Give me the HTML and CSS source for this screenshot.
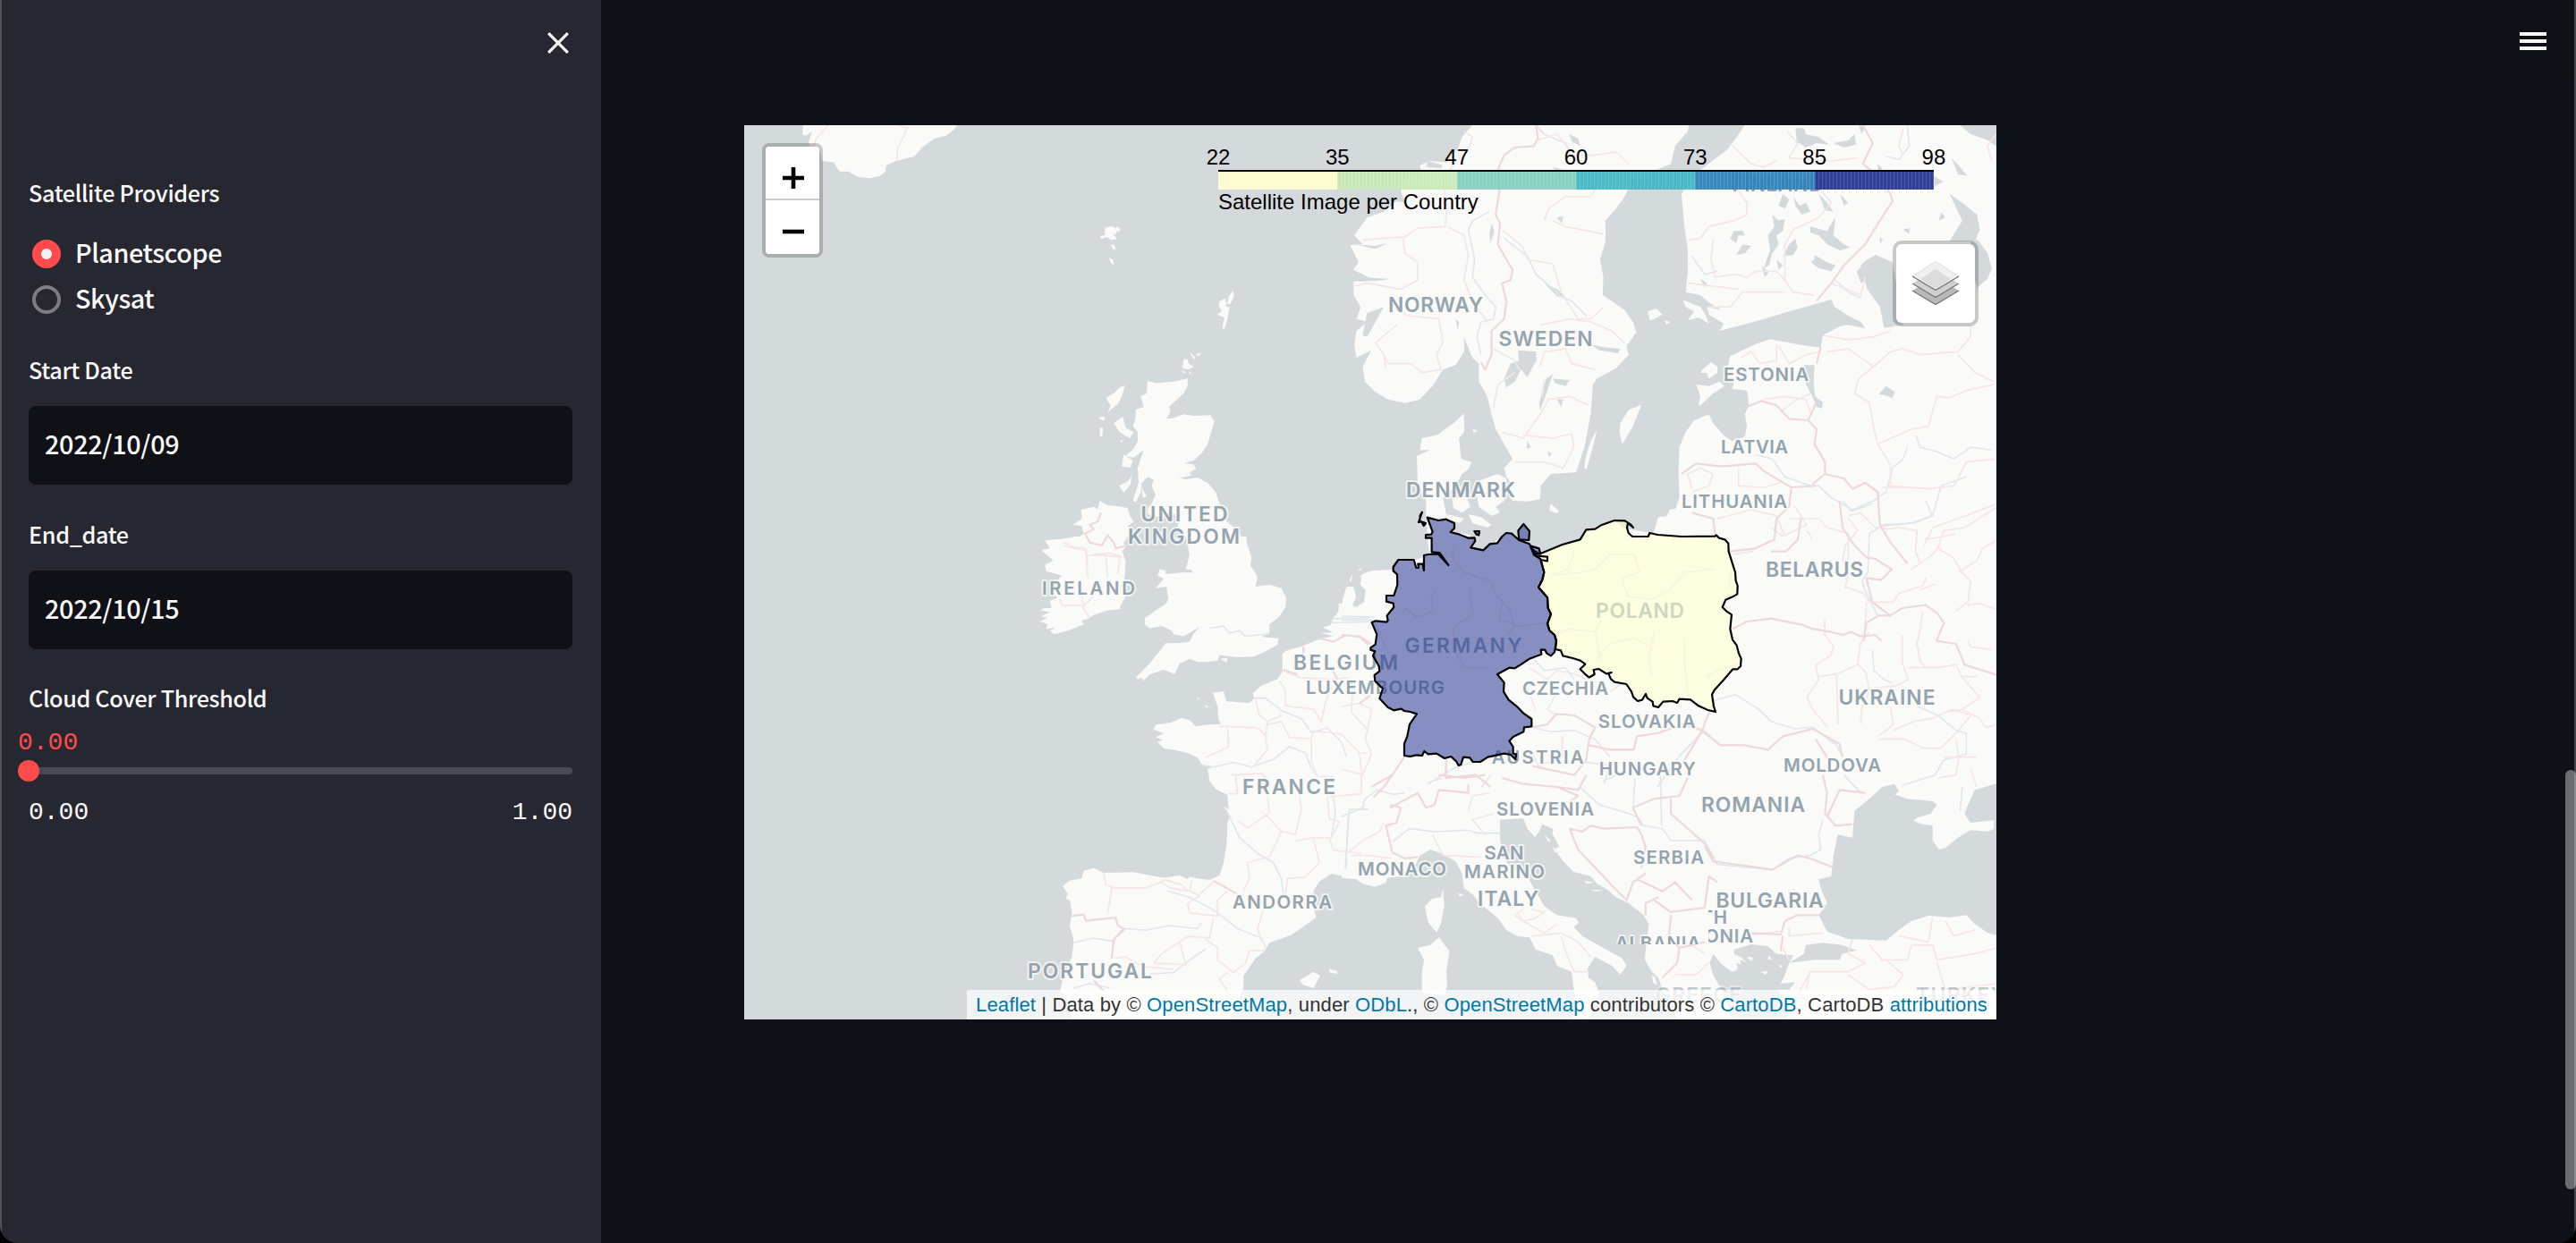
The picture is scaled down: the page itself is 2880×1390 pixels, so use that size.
FILE: index.html
```html
<!DOCTYPE html>
<html lang="en">
<head>
<meta charset="utf-8">
<title>Satellite Images</title>
<link rel="stylesheet" href="styles.css">
</head>
<body>
<div class="app">
  <aside class="sidebar">
    <div class="sidebar-top">
      <svg class="close" viewBox="0 0 24 24"><path d="M2 2L22 22M22 2L2 22"/></svg>
    </div>
    <div class="field providers">
      <div class="label">Satellite Providers</div>
      <div class="radio"><i class="dot on"></i><span>Planetscope</span></div>
      <div class="radio"><i class="dot"></i><span>Skysat</span></div>
    </div>
    <div class="field date">
      <div class="label">Start Date</div>
      <div class="input">2022/10/09</div>
    </div>
    <div class="field date">
      <div class="label">End_date</div>
      <div class="input">2022/10/15</div>
    </div>
    <div class="field slider">
      <div class="label">Cloud Cover Threshold</div>
      <div class="value">0.00</div>
      <div class="track"><i class="thumb"></i></div>
      <div class="range"><span>0.00</span><span>1.00</span></div>
    </div>
  </aside>
  <main class="main">
    <header class="header">
      <div class="menu"><i></i><i></i><i></i></div>
    </header>
    <section class="map">
      <svg class="tiles" viewBox="832 140 1400 1000">
        <defs>
          <clipPath id="row-cut"><rect x="832" y="140" width="1400" height="916"/></clipPath>
          <clipPath id="col-cut"><rect x="1910" y="140" width="322" height="1000"/></clipPath>
        </defs>
        <!-- Iceland, Faroes, northern Britain and Ireland -->
        <g class="land" transform="translate(830 130) scale(.44643 .33333)">
          <path d="M152 30L150 60 158 65 175 52 165 90 195 120 200 150 230 155 235 170 245 185 265 185 290 203 320 208 345 200 358 185 360 165 385 150 430 135 450 105 480 75 510 65 530 45 538 30Z"/>
          <path d="M908 375L925 368 940 380 935 395 928 395 938 412 925 415 912 405 900 412 895 402 908 398ZM938 368L946 378 943 390 936 380ZM922 432L930 430 936 445 929 448ZM918 475L928 480 931 500 922 490Z"/>
          <path d="M1195 620L1210 612 1212 640 1220 640 1215 680 1208 713 1202 712 1207 675 1188 665 1200 655 1193 635ZM1228 585L1232 600 1222 630 1214 630 1218 605Z"/>
          <path d="M1105 815L1115 815 1118 830 1130 840 1118 850 1102 845ZM1118 788L1135 810 1130 815ZM1135 800L1150 793 1143 805ZM1100 850L1110 860 1104 862ZM1118 856L1124 860 1120 866Z"/>
          <path d="M1015 888L1035 895 1080 890 1115 880 1115 905 1105 930 1085 955 1068 975 1072 990 1062 1015 1080 1012 1105 1000 1130 1005 1172 1003 1182 1025 1175 1055 1165 1100 1150 1130 1130 1155 1105 1165 1130 1168 1137 1182 1120 1195 1125 1205 1100 1212 1088 1210 1110 1218 1140 1212 1165 1230 1185 1260 1195 1300 1205 1350 1240 1390 1265 1440 1275 1480 1270 1520 1110 1520 1120 1470 1125 1440 1110 1410 1090 1375 1095 1345 1075 1330 1045 1345 1015 1335 1015 1315 1025 1300 1035 1270 1025 1240 1030 1220 1015 1210 1000 1230 998 1260 985 1295 978 1290 992 1230 990 1180 1005 1120 980 1145 960 1140 980 1115 990 1090 990 1060 978 1040 985 1010 985 985 1005 975 998 940 1012 930Z"/>
          <path d="M958 903L950 940 940 965 915 993 922 970 910 945 930 930 945 910ZM930 1030L952 1008 960 1045 980 1060 970 1080 945 1060ZM892 1010L908 1008 905 1022ZM895 1045L903 1045 901 1078 895 1070ZM955 1135L978 1155 972 1178 950 1175ZM975 1205L972 1235 955 1262 943 1240 965 1225ZM1000 1245L1012 1275 1003 1282ZM945 1085L953 1088 950 1096Z"/>
          <path d="M895 1290L915 1305 940 1308 965 1315 970 1340 980 1360 965 1375 975 1390 955 1430 960 1445 950 1460 960 1520 775 1520 785 1500 770 1480 750 1458 775 1450 758 1425 800 1418 830 1425 855 1400 850 1375 828 1370 850 1350 848 1320 880 1310 890 1318Z"/>
        </g>
        <!-- Scandinavia, the Baltic coast and western Russia -->
        <g class="land" transform="translate(1500 130) scale(.47194 .33333)">
          <path d="M310 30L285 70 275 110 260 130 250 155 210 150 185 165 190 190 160 205 140 250 150 290 130 285 100 320 60 340 30 400 50 430 20 432 28 455 40 490 28 515 70 545 28 555 28 600 45 640 35 680 60 690 35 720 30 770 35 810 70 785 50 840 55 890 80 925 110 950 150 962 185 950 215 905 240 850 270 835 290 790 290 740 298 770 310 810 325 830 325 890 345 940 355 1000 365 1050 385 1100 405 1150 385 1180 390 1210 405 1235 390 1255 405 1290 440 1292 470 1285 472 1240 495 1200 555 1195 575 1110 590 1000 595 900 605 880 650 845 680 800 675 770 698 725 690 690 670 650 640 620 618 600 620 540 612 480 625 420 625 350 650 310 670 270 690 210 745 180 780 160 790 100 820 50 822 30Z"/>
          <path d="M955 30L915 110 850 180 805 260 812 370 820 450 820 520 815 590 850 600 870 625 900 650 865 640 870 665 905 695 895 720 950 700 1000 680 1060 655 1110 635 1160 615 1168 640 1200 670 1230 690 1240 712 1200 700 1180 705 1140 735 1135 775 1100 770 1015 748 980 765 920 805 915 840 910 880 930 890 925 915 960 920 965 970 955 1000 960 1040 955 1075 925 1090 905 1070 880 1030 870 1000 835 1020 815 1060 800 1110 798 1200 800 1280 795 1300 785 1340 750 1345 738 1400 640 1375 580 1390 565 1420 480 1465 460 1445 430 1430 395 1400 340 1455 305 1445 305 1405 265 1395 265 1360 200 1340 205 1440 215 1510 1600 1510V30Z"/>
          <path d="M710 968L690 1040 665 1100 658 1060 660 1030 680 985ZM605 1050L595 1110 580 1185 575 1180 577 1150 590 1090ZM840 900L870 905 895 890 907 905 880 930 850 970 845 968 850 940ZM855 850L875 825 890 840 890 860 870 880 865 862 850 860ZM725 655L745 645 760 665 740 680 730 685ZM765 685L778 690 770 698ZM495 1300L515 1325 510 1332 492 1322ZM808 615L850 640 860 660 870 695 845 675 820 685 835 655 815 640Z"/>
          <path d="M290 997L290 1060 278 1080 283 1150 308 1160 300 1185 285 1200 270 1240 240 1280 250 1350 200 1345 200 1290 180 1230 178 1140 210 1120 185 1120 190 1080 225 1070 265 1030ZM262 1285L295 1275 305 1310 285 1330 265 1315ZM330 1220L370 1200 390 1215 385 1290 365 1310 375 1330 355 1340 325 1310 320 1270ZM300 1335L330 1345 355 1370 345 1380 310 1365ZM310 1048L322 1055 313 1062ZM250 1335L290 1350 280 1365 250 1350Z"/>
        </g>
        <g class="lake" transform="translate(1500 130) scale(.47194 .33333)">
          <path d="M418 785L460 790 462 820 455 835 440 875 425 850 410 890 390 910 385 880 400 830 420 820ZM500 865L485 930 470 988 468 960 478 910 485 880ZM1095 835L1120 835 1118 900 1122 940 1140 960 1137 980 1125 975 1115 940 1100 900ZM1290 905L1310 925 1305 945 1285 935 1272 932ZM1230 500L1240 485 1265 465 1305 490 1330 700 1285 710 1275 640 1245 580ZM1490 400L1510 420 1530 460 1540 510 1530 545 1505 575 1490 500ZM1440 260L1470 290 1505 330 1512 380 1500 420 1440 420 1470 350ZM1465 30L1490 60 1530 80 1560 110 1600 30ZM1403 200L1425 220 1405 235ZM1445 140L1465 170 1482 200 1460 195Z"/>
          <path d="M1075 40L1095 40 1100 60 1130 70 1155 95 1125 90 1100 105 1078 85ZM1165 90L1200 80 1215 60 1218 95 1190 105ZM1225 30L1240 35 1232 60ZM1270 160L1280 175 1284 195 1270 180ZM1330 380L1345 375 1345 395ZM1230 560L1220 520 1235 500 1250 540ZM1345 220L1360 240 1340 230ZM540 60L560 75 565 100 545 85ZM500 170L525 180 515 195ZM510 340L525 335 522 360ZM355 360L362 385 352 425 350 395ZM480 560L510 580 530 605 512 605ZM590 765L620 775 660 780 655 795 610 785ZM500 880L540 885 530 905 505 895ZM510 950L525 950 520 975ZM440 1090L448 1110 438 1115ZM488 1125L498 1130 492 1145ZM205 150L240 165 235 175 200 170ZM270 680L278 690 275 720ZM30 430L80 435 110 425 80 445ZM40 540L110 545 145 530 100 550 40 555ZM60 660L100 640 60 740 50 735Z"/>
          <path d="M930 385L950 385 955 400 940 400 935 425 920 410ZM950 430L970 435 955 460 935 465ZM1020 330L1035 350 1050 345 1045 385 1030 400 1035 430 1020 460 1012 500 1000 510 1015 450 1010 400 1025 370ZM1070 270L1085 300 1100 290 1110 320 1090 330 1075 300ZM1045 260L1060 280 1050 310 1035 300ZM1130 260L1150 290 1165 320 1145 315ZM1060 430L1075 410 1080 440 1070 465 1045 470ZM1110 370L1150 385 1160 360 1170 340 1165 400 1190 430 1205 440 1180 450 1150 430 1130 400 1110 390ZM1120 465L1150 490 1170 500 1160 520 1130 510 1112 490 1120 480ZM1180 260L1200 290 1190 300ZM1030 480L1045 500 1035 515ZM850 545L865 560 860 575ZM995 500L1012 525 1002 540ZM1420 320L1430 340 1415 350ZM1275 405L1282 415 1275 430Z"/>
        </g>
        <!-- Ireland, southern Britain, France and Iberia -->
        <g class="land" transform="translate(830 600) scale(.44643 .35075)">
          <path d="M835 0L955 0 950 40 960 80 958 120 955 160 960 190 945 225 948 232 915 235 880 250 865 262 850 268 855 280 820 298 780 312 770 300 785 290 760 295 765 280 745 270 765 258 748 255 770 240 745 235 755 228 775 228 770 205 790 195 780 185 795 165 785 145 800 125 760 110 758 90 780 75 750 42 770 38 758 12 800 8Z"/>
          <path d="M1110 0L1115 20 1120 60 1117 90 1128 115 1100 115 1060 120 1060 108 1045 103 1040 125 1055 135 1035 165 1062 160 1067 200 1060 215 1035 235 1008 260 1008 280 1020 293 1050 285 1075 300 1080 312 1105 318 1145 288 1130 310 1120 335 1090 340 1060 340 1042 370 1020 405 985 450 990 455 1000 450 1005 460 1020 440 1055 425 1082 438 1095 405 1120 390 1140 400 1165 400 1190 395 1195 378 1240 385 1280 383 1305 370 1340 345 1343 325 1300 320 1320 305 1320 280 1345 255 1360 225 1362 195 1350 165 1320 153 1285 160 1290 130 1280 105 1260 75 1275 75 1265 30 1262 0Z"/>
          <path d="M1197 390L1215 388 1212 402ZM1395 1415L1430 1388 1447 1400 1430 1440 1405 1430ZM1468 1378L1490 1385 1490 1395 1472 1390ZM1138 514L1144 516 1140 520ZM1158 538L1168 541 1162 547ZM1548 125L1570 112 1570 165 1555 165ZM1520 140L1528 120 1524 145ZM1540 108L1552 100 1550 107Z"/>
          <path d="M1515 160L1530 160 1537 190 1528 220 1545 228 1570 205 1600 205 1600 1130 1568 1115 1550 1100 1510 1085 1475 1075 1445 1100 1430 1130 1430 1180 1437 1215 1375 1270 1320 1295 1305 1325 1285 1345 1255 1400 1255 1440 1235 1500 1220 1545 825 1545 820 1480 795 1450 805 1400 825 1340 830 1290 820 1240 825 1200 820 1160 810 1155 815 1140 802 1115 820 1097 850 1090 855 1065 880 1057 905 1072 980 1070 1040 1085 1060 1088 1095 1080 1115 1092 1120 1085 1140 1090 1170 1095 1195 1080 1205 1040 1213 980 1215 910 1222 890 1205 860 1218 870 1215 825 1185 805 1170 780 1165 740 1175 738 1150 725 1140 705 1115 690 1080 680 1055 675 1040 655 1052 648 1035 640 1055 628 1030 615 1035 600 1075 592 1100 578 1120 585 1135 605 1160 600 1198 598 1192 580 1190 540 1178 498 1205 493 1212 525 1270 530 1282 515 1278 500 1300 475 1340 455 1353 430 1352 375 1360 365 1400 350 1450 325 1480 318 1450 308 1478 305 1455 290 1475 280 1478 262 1495 235 1508 200Z"/>
        </g>
        <!-- Central and eastern Europe -->
        <g class="land" transform="translate(1500 560) scale(.33333)">
          <path d="M-10 345L0 345 15 290 35 295 40 340 30 370 75 340 80 300 62 280 70 245 100 235 175 230 190 200 240 200 300 180 290 60 350 65 380 110 440 125 435 160 475 165 555 108 630 150 680 175 800 130 850 95 920 67 970 120 1060 110 1100 30 1150 20 1160 0 2200 0 2200 970H-10Z"/>
        </g>
        <!-- Italy, the Balkans and the Black Sea -->
        <g transform="translate(1500 860) scale(.47194 .33333)">
          <path class="land" d="M0 0H1560V850H0Z"/>
          <path class="water" d="M-5 365L35 370 50 385 80 395 105 380 108 365 160 355 175 320 185 290 210 270 240 285 270 310 285 350 290 400 310 420 330 455 345 470 370 500 390 540 415 560 445 565 460 605 500 625 510 660 545 680 550 740 555 780 545 850H-5Z"/>
          <path class="water" d="M375 170L430 165 440 200 458 228 470 205 475 185 500 200 500 220 515 260 505 270 525 310 550 345 590 360 605 385 630 405 650 430 680 450 715 490 728 520 722 580 718 640 735 680 750 700 760 740 800 850H580L610 750 600 715 585 700 582 670 600 630 640 660 660 690 675 660 665 635 620 600 570 560 550 530 562 515 555 500 510 490 480 460 455 400 440 360 400 330 380 290 375 230Z"/>
          <path class="water" d="M930 605L970 588 1010 595 1030 620 1070 625 1060 650 1050 690 1040 720 1075 715 1060 740 1035 740 1050 800 1060 850H930L900 740 880 690 872 650 880 620 900 655 925 680 938 670 935 650 945 655 945 640 960 650 945 630 930 620Z"/>
          <path class="water" d="M1100 590L1140 583 1185 590 1220 608 1185 620 1180 640 1120 640 1060 650 1095 620Z"/>
          <path class="water" d="M1280 60L1310 50 1320 75 1310 85 1340 100 1400 108 1410 120 1395 150 1360 165 1355 175 1375 185 1400 190 1400 240 1415 270 1430 265 1460 230 1490 205 1530 210 1545 200 1545 172 1490 180 1475 150 1490 100 1500 70 1560 45V560L1530 550 1500 520 1480 490 1440 498 1390 492 1350 510 1320 540 1290 575 1200 570 1150 545 1130 490 1150 450 1135 400 1130 370 1160 360 1165 290 1175 220 1210 230 1215 140 1250 100Z"/>
          <path class="land" d="M240 403L243 460 235 520 225 548 205 515 197 460 215 435 235 430ZM230 565L255 610 248 680 250 720 245 760 190 750 190 680 195 640 180 600 210 590ZM275 418L290 420 280 428ZM960 630L975 632 970 645ZM1012 625L1020 640 1010 638ZM992 680L1010 678 1005 690ZM1035 655L1045 660 1040 668ZM735 692L742 695 748 725 738 718ZM480 220L495 240 490 245ZM575 375L600 380 580 385ZM590 405L620 405 600 410ZM500 260L512 275 505 280ZM930 655L935 680 925 672Z"/>
        </g>
        <!-- Rivers -->
        <g class="river" transform="translate(1500 130) scale(.47194 .33333)">
          <path d="M350 320L310 350 300 380 315 480 310 540 340 600 365 640 360 680 330 690 320 740 330 800M385 410L440 470 460 530 485 560 520 605 545 620 580 670M480 60L530 90 545 140M460 30L480 60M1340 30L1345 100 1320 145 1290 135M830 470L860 530 890 520M1170 550L1200 590 1230 610M980 1135L1020 1150 1050 1210 1110 1240 1130 1240 1160 1280 1210 1320 1260 1290 1290 1260 1305 1180 1330 1150 1340 1110M1280 1375L1350 1365 1400 1340 1420 1240 1480 1210M1360 1070L1370 1110 1410 1125 1450 1150 1490 1110 1540 1120"/>
        </g>
        <g class="river" transform="translate(830 600) scale(.44643 .35075)">
          <path d="M1170 292L1205 285 1220 308 1245 300 1260 318 1320 310M1282 515L1310 515 1350 555 1400 580 1425 625 1465 610 1500 655 1512 700M1150 728L1180 735 1230 720 1275 735 1330 710 1370 670 1410 690 1425 740 1440 760M1215 880L1245 960 1290 1010 1330 1040 1350 1090 1355 1140M1065 1130L1120 1150 1180 1190 1240 1250 1300 1280 1310 1310M830 1295L880 1280 925 1290 960 1250 1010 1255 1070 1240 1140 1250 1150 1230M1020 1395L1080 1390 1120 1350 1160 1315M1480 830L1485 880 1475 960M1568 870L1520 870 1510 1060M1478 262L1568 260M1478 275L1568 272M830 1440L870 1425 920 1440"/>
        </g>
        <g class="river" transform="translate(1500 560) scale(.33333)">
          <path d="M0 400L110 400 150 500M0 388L110 390M640 525L680 570 750 560 780 600M900 640L960 600M290 950L370 900 430 880M640 760L700 775 780 770 850 800 900 860M1210 775L1130 860 1060 960M1210 775L1260 810M1250 670L1320 650 1400 700 1440 740 1520 765 1580 760 1660 820 1680 860M1680 0L1710 35 1780 10M1960 0 1980 50 1920 75 1820 80 1770 110 1765 240 1745 270 1760 310 1800 390M1780 500L1785 570 1820 600 1845 610M1930 690L2000 720 2060 770 2095 780 2095 850 2020 870 1990 920 1880 955M780 870L900 890 880 950M470 960L500 920"/>
        </g>
        <g class="river" transform="translate(1500 860) scale(.47194 .33333)">
          <path d="M0 160L50 130 55 100 85 70 120 85 150 80M15 160L10 330M120 245L160 200 220 210 300 205 320 215 380 215M205 45L240 30M565 60L610 120 660 140 700 160 715 190 760 200 780 240 860 240 890 320 960 330 1020 338 1060 300 1110 290 1135 270 1130 220 1140 170M695 30L690 140M755 20L758 190M620 40L650 20M1190 20L1230 80M1470 60L1465 140"/>
        </g>
        <!-- Regional boundaries -->
        <g class="region" transform="translate(830 130) scale(.44643 .33333)">
          <path d="M215 30L185 75 180 95 165 105M415 35L388 110 388 150M390 30L415 40M805 1430L830 1445 860 1450 865 1500M880 1470L920 1465 950 1480"/>
        </g>
        <g class="region" transform="translate(1500 130) scale(.47194 .33333)">
          <path d="M290 50L310 70 300 110 260 170 240 220 250 300 245 370 180 375 150 405 90 410 50 415M250 370L290 400 300 470 290 550 310 620 345 690M145 410L150 460 180 490 180 550 140 580 60 560 30 570M140 600L130 650 160 670 230 680 240 760 225 800 235 850 190 860 165 830 110 830 100 800M130 700L80 760 100 800 105 850M380 380L430 440 440 480 500 495 520 590 560 680 590 680 620 640M480 350L490 310 530 270 590 270 610 220M500 350L530 370 620 395M465 80L510 60 550 130 600 130 650 120 680 160M470 700L540 680 590 690 640 720 670 760M360 780L410 820 420 850M470 840L480 790 530 780 545 830 600 850M360 980L370 900 410 860M380 1060L430 1080 470 1000 490 950 540 940 585 970M430 1070L500 1080 545 1065 550 1110 525 1180 480 1160 410 1160M475 940L480 880"/>
          <path d="M820 415L850 410 870 370 930 350 960 330 960 290 935 240M920 90L970 160 1000 170 1030 150M880 410L875 480 885 540 930 530 960 540 980 520 1030 520 1050 550 1070 590 1120 600M1050 550L1050 430 1070 380 1130 340 1160 290 1130 240M1055 50L1080 90 1060 140 1160 150 1220 140M870 640L920 640 950 590 1000 590 1050 590M820 560L880 570 940 580M1160 560L1230 600 1240 540M945 810L970 790 990 830 1030 820 1030 765M1035 770L1060 830 1100 800 1135 790M1000 950L1050 940 1100 950 1110 990M1040 990L1080 950 1110 930M1140 735L1200 750 1260 740 1300 720M1150 790L1200 780 1260 840 1300 790 1330 780 1370 800 1460 790 1490 740 1490 700M1460 800L1500 860 1545 890M1545 900L1480 920 1440 945 1410 940 1390 1040 1350 1050 1270 1100 1260 1040 1250 960 1215 930 1225 880 1260 840M1270 1100L1300 1170 1300 1240 1390 1250 1450 1240 1480 1160 1545 1150M1280 1245L1340 1245M830 1250L820 1200 850 1180 880 1200 870 1240 830 1260M940 1180L940 1240 1000 1245 1040 1230M1330 40L1320 100 1330 130M1550 60L1530 100 1540 150M890 1350L970 1320 1030 1340 1050 1410M1060 1350L1130 1350 1150 1380 1200 1400 1200 1500M1380 1440L1400 1380 1480 1340 1551 1300"/>
        </g>
        <g class="region" transform="translate(830 600) scale(.44643 .35075)">
          <path d="M805 30L860 45 865 130M860 60L910 60 915 130M880 55L945 65 940 120M795 200L800 220 855 220 880 190M850 190L855 230 870 260M1355 430L1400 450 1480 455 1520 450M1345 460L1360 490 1360 540 1430 550 1450 590 1460 530 1475 480M1285 520L1295 570 1315 590 1350 570M1315 590L1310 640 1315 680 1285 725 1275 740M1195 605L1290 610 1315 640M1215 610L1218 670 1160 705M1315 600L1350 590 1370 640 1425 645 1430 620 1500 630 1545 690 1568 690M1425 650L1425 720 1440 765 1480 765M1225 760L1300 755 1320 780M1235 760L1240 820 1215 820M1315 830L1320 880 1265 930 1240 905M1305 880L1350 940 1385 950 1400 870 1395 820M1350 940L1320 1020 1265 1040 1270 1090 1255 1130M1385 970L1430 960 1445 1040 1410 1085 1365 1090 1360 1140M1430 960L1470 960 1480 1000 1550 1010M1465 830L1470 900 1495 910 1475 960M1470 830L1550 820 1550 750 1545 690M1530 470L1525 560 1568 620M1215 1130L1190 1160 1190 1210 1120 1200 1115 1170 1145 1145 1120 1130 1125 1095M1145 1140L1180 1100M905 1075L910 1110 930 1120 1010 1120 1060 1095 1100 1110 1115 1130 1070 1120 1045 1100M925 1120L915 1200M1180 1215L1170 1280 1115 1275 1050 1330 1030 1360 1110 1365 1095 1290M1160 1285L1190 1310 1190 1350 1230 1390 1260 1360 1270 1320 1310 1320M1305 1190L1290 1250 1300 1290M1215 1390L1195 1410 1215 1450M930 1345L960 1340 1000 1370 1080 1380"/>
        </g>
        <g class="region" transform="translate(1500 560) scale(.33333)">
          <path d="M200 380L215 360 250 390 310 370 300 330 320 290M380 150L370 190 410 240 500 270 520 320 560 360 580 420 540 470 480 480M430 300L440 380 380 420 370 480 410 560 500 560M540 330L530 400 600 420 690 410M720 250L800 240 850 230 900 180 980 180 1000 240 940 260 960 320 1040 330M780 170L760 230 700 250M720 450L760 430 850 440 870 400M850 440L870 540M1040 330L1100 300 1150 240 1250 230M1050 440L1030 520 1040 590M1150 460L1150 540 1160 640M850 540L900 480 980 460 1050 500M0 690L60 680 100 700 80 800 100 850 70 920 0 900M630 560L690 600 720 570 780 580 820 600M620 620L650 700M720 650L690 700 720 720M640 850L660 890 740 860 740 790M1220 590L1260 570 1340 545M1300 300L1310 210M1310 180L1380 170"/>
          <path d="M1700 50L1740 40 1790 90 1830 95 1870 90 1930 100 1925 170 1940 210M1700 60L1730 100 1690 150 1680 200 1700 240 1690 290 1750 310 1770 340 1850 340 1870 310 1950 285 1960 260M1955 130L2020 120 2060 110M1760 340L1755 430M1940 300 1990 280M2200 20L2090 90 2020 100 2000 160 1970 190 1910 230M2000 160L2050 190 2080 240 2110 270 2100 340 2060 370M2200 130L2150 160 2130 200 2070 240M2100 350L2140 345 2200 365M1620 400L1620 450 1650 490 1640 520 1590 550 1600 600 1560 660 1580 700 1630 760M1600 590L1660 580 1665 750M1665 580L1730 550 1740 480 1770 440M1735 550L1760 580 1770 640 1745 690 1740 750M1770 630L1860 620 1900 600 1880 540 1880 450M1950 370L1940 430 1930 480 1940 540 1960 560M1900 560L2000 560 2060 550 2080 590 2130 590M2080 590L2140 660 2080 700 2020 710M2080 700L2140 730 2160 760 2200 750M1840 690L1850 750 1800 790M1850 770L1920 740 1980 730 2050 700 2110 720 2060 780 2010 830 1950 830 1890 800 1800 800M2060 800L2070 860 2060 920 2000 930M2020 860 2130 860M2180 500 2110 490 2100 470M2110 900L2130 960M1520 20L1560 80 1480 120 1440 90M1560 100L1580 130"/>
        </g>
        <g class="region" transform="translate(1500 860) scale(.47194 .33333)">
          <path d="M15 280L50 240 90 210 100 180M20 290L60 290 120 300M215 220L240 290 330 295M300 140L310 90 350 80M360 150L310 170 340 220M415 480L430 510 460 500 480 480 450 470M430 470L410 490 430 510 480 550 510 520M450 560L520 550 560 580 590 630M520 560L530 610 550 680 585 680M790 560L840 600 860 620M790 690L840 690 870 650M1045 600L1060 640M1060 530L1060 560 1140 550M1210 570L1200 620 1240 650 1200 680 1110 680 1100 740M1250 590L1280 640 1340 640 1350 590 1400 590 1410 640 1500 620 1551 600M1320 560L1390 580 1400 500M1200 690L1250 740 1310 730 1330 690 1290 640M1410 650L1430 740 1551 720M1430 510L1450 560 1500 540M1110 680L1080 760 1120 790M950 560L1040 545"/>
        </g>
        <!-- National boundaries -->
        <g class="border">
          <g transform="translate(830 130) scale(.44643 .33333)"><path d="M898 1330L890 1360 870 1370 880 1385 858 1400 870 1430 900 1440 915 1405 930 1430 935 1450 962 1440"/></g>
          <g transform="translate(1500 130) scale(.47194 .33333)">
            <path d="M460 30L465 75 455 100 410 105 385 130 370 180 375 240 365 330 375 360 370 430 390 480 405 515 400 550 380 560 390 620 385 680 355 720 355 800 340 850 330 825M1235 30L1258 90 1235 160 1270 200 1300 260 1305 285 1275 350 1240 430 1190 500 1160 560 1125 620M1135 775L1125 830M960 975L995 955 1030 970 1060 1015 1105 1020 1125 960M1105 1020L1125 1050 1120 1100 1145 1160 1145 1200 1115 1235M805 1200L840 1165 900 1175 980 1165 1000 1190 1035 1220 1065 1245 1120 1240M1145 1200L1190 1215 1210 1250 1240 1230 1270 1260 1275 1370 1300 1430 1340 1500M1065 1250L1060 1310 1030 1350 1025 1420 980 1450 920 1460M830 1330L880 1350 885 1405"/>
          </g>
          <g transform="translate(830 600) scale(.44643 .35075)">
            <path d="M1445 325L1480 335 1510 315 1545 320 1568 345M1405 350L1405 375M1355 425L1390 440M1480 430L1490 455M1180 1098L1205 1115 1240 1140M825 1210L855 1205 860 1225 935 1215 940 1240 955 1250 930 1285 925 1345M880 1415L905 1450"/>
          </g>
          <g transform="translate(1500 560) scale(.33333)">
            <path d="M0 450L60 455 100 480M100 650L60 680M100 960L170 920 210 860M350 860L350 930 450 920 500 960M640 760L690 750 720 715 780 720 850 760 830 800 820 870 780 920 640 890M830 820L900 835 980 835 990 790 1060 780 1140 750 1210 770M1250 670L1220 740 1210 770 1270 820 1350 820 1430 835 1480 790 1580 765 1670 815 1680 860M1210 770L1120 920M1310 430L1360 405 1440 395 1540 415 1580 430 1640 440 1680 450 1710 440 1740 455 1790 450 1810 470M1590 800L1640 880M1670 0L1680 90 1720 150 1760 190 1790 195 1845 230 1810 265 1760 260 1780 340 1840 385 1880 360 1960 350 2000 380 2020 410 1995 470 2060 480 2090 550 2200 585M1800 385L1760 410 1750 470M1800 385H1840M1440 170L1490 170 1530 130 1540 60"/>
          </g>
          <g transform="translate(1500 860) scale(.47194 .33333)">
            <path d="M75 95L100 60 120 20M115 120L140 130 130 180 105 190 120 280 150 300 180 295M115 130L180 80 200 130 220 120 230 70 300 80 300 50M230 20L290 30 340 20M380 30L430 50 510 60 560 70 580 20M510 60L560 90 540 110M540 200L570 210 590 190 620 200 700 195 710 220 720 260 710 330M540 200L560 270 600 330 640 390 675 440 690 380 720 350M820 30L800 90 740 100 690 130 710 190M780 100L780 150 820 200 860 250 880 300M860 260L880 310 960 325 1020 338 1080 290 1110 300 1165 330M700 370L760 410 790 380 830 440M750 430L720 450 720 490M740 440L780 480 860 465 870 360 890 380M780 490L775 560 800 600 860 580M800 600L795 650 760 700M970 550L1040 555 1050 510 1080 490 1130 490M1045 560L1040 610M1140 20L1150 80 1145 150 1170 190 1210 185M1150 160L1180 70 1240 80"/>
          </g>
        </g>
        <!-- Country names -->
        <g class="names">
          <g class="big">
            <text x="1275.5" y="583.2" textLength="97">UNITED</text>
            <text x="1261" y="608.2" textLength="125">KINGDOM</text>
            <text x="1446" y="748.5" textLength="117">BELGIUM</text>
            <text x="1389" y="888" textLength="104">FRANCE</text>
            <text x="1149" y="1094" textLength="139">PORTUGAL</text>
            <text x="1552" y="349" textLength="106">NORWAY</text>
            <text x="1675.5" y="386.5" textLength="105">SWEDEN</text>
            <text x="1572" y="555.6" textLength="122">DENMARK</text>
            <text x="1936.5" y="214" textLength="102">FINLAND</text>
            <text x="1784" y="690.6" textLength="99">POLAND</text>
            <text x="1570.5" y="729.6" textLength="131">GERMANY</text>
            <text x="1974" y="644.8" textLength="109">BELARUS</text>
            <text x="2055.5" y="788.2" textLength="108">UKRAINE</text>
            <text x="1902" y="907.6" textLength="116">ROMANIA</text>
            <text x="1652" y="1013" textLength="68">ITALY</text>
            <text x="1918.6" y="1015" textLength="120">BULGARIA</text>
            <g class="faint">
              <text x="1851" y="1121" textLength="96">GREECE</text>
              <text x="2142" y="1121" textLength="100">TURKEY</text>
            </g>
          </g>
          <text x="1165" y="664.6" textLength="104">IRELAND</text>
          <text x="1460" y="776.4" textLength="155">LUXEMBOURG</text>
          <text x="1378" y="1016.4" textLength="111">ANDORRA</text>
          <text x="1927" y="426.4" textLength="95">ESTONIA</text>
          <text x="1924" y="507" textLength="75">LATVIA</text>
          <text x="1880" y="568.2" textLength="118">LITHUANIA</text>
          <text x="1702" y="777" textLength="96">CZECHIA</text>
          <text x="1786.7" y="814.4" textLength="109">SLOVAKIA</text>
          <text x="1667.7" y="854" textLength="103">AUSTRIA</text>
          <text x="1787.7" y="867" textLength="108">HUNGARY</text>
          <text x="1994" y="863.4" textLength="109">MOLDOVA</text>
          <text x="1673" y="912.4" textLength="109">SLOVENIA</text>
          <text x="1826" y="966" textLength="79">SERBIA</text>
          <text x="1659.5" y="961.4" textLength="44">SAN</text>
          <text x="1637" y="982" textLength="90">MARINO</text>
          <text x="1518" y="979" textLength="99">MONACO</text>
          <text x="1806" y="1062.4" textLength="95" clip-path="url(#row-cut)">ALBANIA</text>
          <g clip-path="url(#col-cut)">
            <text x="1855" y="1033.4" textLength="76">NORTH</text>
            <text x="1827" y="1054.4" textLength="133">MACEDONIA</text>
          </g>
        </g>
        <!-- Choropleth -->
        <g class="choropleth" transform="translate(1500 560) scale(.33333)">
          <path class="poland" d="M680 172L740 147 800 130 820 97 850 95 870 82 915 66 950 67 970 80 978 90 960 75 957 90 962 108 975 120 1028 120 1033 108 1060 114 1140 120 1252 119 1256 115 1266 125 1285 130 1297 143 1298 170 1320 240 1322 268 1328 285 1327 313 1315 320 1288 332 1277 357 1290 370 1308 382 1303 430 1311 466 1325 485 1332 512 1340 530 1338 555 1328 565 1312 565 1280 602 1250 635 1242 650 1248 690 1254 708 1228 702 1197 688 1170 667 1133 665 1125 678 1110 672 1078 674 1062 693 1045 688 1043 674 1025 662 1020 648 1008 668 993 672 978 658 972 640 955 615 915 608 903 598 895 580 905 576 888 580 862 564 845 567 848 582 830 593 815 580 800 565 817 548 800 536 775 528 742 520 735 502 717 498 720 470 714 450 697 435 690 412 702 380 692 360 690 325 660 290 673 265 679 240 667 198 690 202 690 188 650 184 640 165 665 178Z"/>
          <path class="germany" d="M287 56L325 66 350 62 378 75 378 92 365 105 392 112 425 125 446 124 448 135 433 157 475 166 497 145 522 142 538 120 552 108 570 110 595 132 630 145 645 182 667 195 679 240 673 265 660 290 690 325 692 360 702 380 690 412 697 435 714 450 720 470 714 508 702 520 688 512 682 500 668 500 670 515 645 524 630 530 600 550 580 562 562 560 522 582 545 610 543 640 560 668 590 692 610 713 637 732 637 757 612 760 610 775 575 792 562 806 575 825 575 848 585 850 583 868 567 852 545 848 490 860 465 876 440 876 430 862 408 860 400 885 392 888 385 875 367 858 345 864 318 848 290 850 277 840 270 855 250 853 230 858 210 855 210 815 220 790 228 750 252 715 230 708 210 705 200 698 175 703 155 693 127 663 138 630 112 605 110 585 127 572 125 555 105 520 112 505 97 500 97 493 113 482 118 448 101 408 115 403 150 407 155 402 152 385 175 357 173 344 150 338 150 318 175 318 187 282 186 247 173 235 173 222 190 198 242 198 250 225 258 225 256 212 272 212 276 234 276 183 290 180 323 178 358 216 328 174 302 172 302 125 282 125 282 114 300 113 305 104Z"/>
          <path class="germany" d="M610 78L630 102 628 132 595 130 592 100ZM445 102L462 102 460 115 452 113ZM635 152L662 160 667 178 650 178ZM270 38L263 50 262 68 282 75 275 84 268 70 258 72Z"/>
        </g>
      </svg>

      <div class="zoom">
        <div class="btn"><svg viewBox="0 0 26 26"><path d="M1 13H25M13 1V25"/></svg></div>
        <div class="btn"><svg viewBox="0 0 26 26"><path d="M1 13H25"/></svg></div>
      </div>

      <div class="legend">
        <div class="ticks"><span>22</span><span>35</span><span>47</span><span>60</span><span>73</span><span>85</span><span>98</span></div>
        <div class="bar"><i class="c1"></i><i class="c2"></i><i class="c3"></i><i class="c4"></i><i class="c5"></i><i class="c6"></i></div>
        <div class="caption">Satellite Image per Country</div>
      </div>

      <div class="layers">
        <svg viewBox="0 0 52 50">
          <path fill="#b9b9b9" d="M0 33L26 17 52 33 26 49Z"/><path class="edge" d="M0 33L26 48.5 52 33"/>
          <path fill="#d0d0d0" d="M0 25L26 9 52 25 26 41Z"/><path class="edge" d="M0 25L26 40.5 52 25"/>
          <path fill="#f0f0f0" stroke="#c8c8c8" stroke-width=".6" d="M0 17L26 .5 52 17 26 32Z"/><path fill="#dcdcdc" d="M9 20L26 9 43 20 26 31Z"/><path class="edge" d="M0 17L26 32.5 52 17"/>
        </svg>
      </div>

      <div class="attribution"><a>Leaflet</a> | Data by © <a>OpenStreetMap</a>, under <a>ODbL</a>., © <a>OpenStreetMap</a> contributors © <a>CartoDB</a>, CartoDB <a>attributions</a></div>
    </section>
  </main>
  <div class="scrollbar"></div>
</div>
</body>
</html>
```
FILE: styles.css
```css
* { box-sizing: border-box; }
body { margin: 0; background: #000; }
.app {
  position: relative;
  display: flex;
  width: 2880px;
  height: 1390px;
  overflow: hidden;
  border-radius: 0 0 20px 20px;
  background: #0e1117;
  font-family: "Noto Sans CJK JP", "Noto Sans", sans-serif;
  color: #fafafa;
}

/* Sidebar */
.sidebar {
  width: 672px;
  padding: 0 32px 0 30px;
  background: #262730;
  border-left: 2px solid #505159;
  font-weight: 500;
}
.sidebar-top { display: flex; justify-content: flex-end; height: 193px; padding: 35px 3px 0 0; }
.close { width: 26px; height: 26px; }
.close path { stroke: #fafafa; stroke-width: 3; fill: none; }
.field { display: flex; flex-direction: column; }
.label { height: 44px; line-height: 44px; font-size: 25.2px; letter-spacing: -.35px; white-space: nowrap; }
.providers { height: 198px; }
.providers .label { margin-bottom: 21px; }
.radio { display: flex; align-items: center; gap: 16px; height: 51px; padding-left: 4px; font-size: 28.8px; letter-spacing: -.45px; }
.radio span { padding-bottom: 5px; }
.dot { width: 32px; height: 32px; border: 4px solid #7d7d82; border-radius: 50%; }
.dot.on { border: 10px solid #ff4b4b; background: #f0f2f6; }
.date { height: 183.5px; }
.input {
  height: 88px;
  margin-top: 19px;
  padding-left: 18px;
  line-height: 84px;
  border-radius: 8px;
  background: #101116;
  font-size: 28.8px;
  letter-spacing: -.35px;
}
.slider .value { margin: 9px 0 0 -12px; height: 40px; line-height: 40px; color: #ff4b4b; }
.slider .value, .range { font-family: "Liberation Mono", monospace; font-size: 28px; font-weight: 400; }
.track { position: relative; height: 8px; margin-top: 7px; border-radius: 4px; background: #484955; }
.thumb { position: absolute; left: -12px; top: -8px; width: 24px; height: 24px; border-radius: 50%; background: #ff4b4b; }
.range { display: flex; justify-content: space-between; margin-top: 23px; line-height: 40px; }

/* Main column */
.main { flex: 1; }
.header { display: flex; justify-content: flex-end; height: 90px; padding: 36px 33px 0 0; background: #101116; }
.menu { display: flex; flex-direction: column; gap: 4px; width: 30px; }
.menu i { height: 4px; background: #fafafa; }
.map { position: relative; width: 1400px; height: 1000px; margin: 50px 0 0 160px; overflow: hidden; background: #d4dadc; }
.tiles { display: block; width: 1400px; height: 1000px; }
.land { fill: #fafaf8; }
.water, .lake { fill: #d4dadc; }
.river path, .region path, .border path { fill: none; vector-effect: non-scaling-stroke; stroke-linejoin: round; }
.river path { stroke: #e0e6e9; stroke-width: 1.6px; }
.region path { stroke: #f5e5e7; stroke-width: 1.7px; }
.border path { stroke: #eed8dc; stroke-width: 2.2px; }
.names text {
  font-family: Inter, Lato, sans-serif;
  font-weight: 600;
  font-size: 20.4px;
  fill: #94a4ae;
  stroke: #fafaf8;
  stroke-opacity: .75;
  stroke-width: 4px;
  stroke-linejoin: round;
  paint-order: stroke;
}
.names .big text { font-size: 22.8px; }
.faint { opacity: .55; }
.choropleth path { stroke: #000; stroke-width: 2.2px; vector-effect: non-scaling-stroke; stroke-linejoin: round; }
.poland { fill: rgba(255, 255, 204, .55); }
.germany { fill: rgba(37, 52, 148, .54); }

/* Map controls */
.zoom { position: absolute; left: 20px; top: 20px; width: 68px; border: 4px solid rgba(0, 0, 0, .2); border-radius: 8px; background-clip: padding-box; }
.btn { display: flex; align-items: center; justify-content: center; height: 60px; padding: 9px 0 0 2px; background: #fff; border-radius: 0 0 4px 4px; }
.btn:first-child { height: 60px; padding-top: 11px; border-bottom: 2px solid #ccc; border-radius: 4px 4px 0 0; }
.btn svg { width: 26px; height: 26px; }
.btn path { stroke: #000; stroke-width: 4.6; fill: none; }
.legend { position: absolute; left: 530px; top: 22px; width: 800px; font-family: "Liberation Sans", Arial, sans-serif; font-size: 24px; color: #000; }
.ticks { display: flex; justify-content: space-between; margin: 0 -20px; height: 28px; line-height: 28px; }
.ticks span { width: 40px; text-align: center; }
.bar { display: flex; height: 22px; border-top: 2px solid #000; }
.bar i { flex: 1; background-image: repeating-linear-gradient(90deg, rgba(255, 255, 255, .16) 0 1px, transparent 1px 4px); }
.c1 { background-color: rgba(255, 255, 204, .92); }
.c2 { background-color: rgba(199, 233, 180, .92); }
.c3 { background-color: rgba(127, 205, 187, .92); }
.c4 { background-color: rgba(65, 182, 196, .95); }
.c5 { background-color: rgba(44, 127, 184, .95); }
.c6 { background-color: rgba(37, 52, 148, .95); }
.caption { line-height: 28px; white-space: nowrap; }
.layers { position: absolute; right: 20px; top: 129px; display: flex; align-items: center; justify-content: center; width: 96px; height: 96px; border: 4px solid rgba(0, 0, 0, .2); border-radius: 10px; background: #fff; background-clip: padding-box; }
.layers svg { width: 52px; height: 50px; }
.edge { fill: none; stroke: #777; stroke-width: 1.4; }
.attribution { position: absolute; right: 0; bottom: 0; height: 33px; padding: 0 10px; line-height: 34px; background: rgba(255, 255, 255, .7); font-family: "Liberation Sans", Arial, sans-serif; font-size: 22px; letter-spacing: .14px; color: #333; white-space: nowrap; }
.attribution a { color: #0078a8; }

.scrollbar { position: absolute; right: 0; top: 861px; width: 12px; height: 469px; border-radius: 6px; background: #6b6c70; }
.app::after { content: ""; position: absolute; top: 0; right: 0; width: 2px; height: 1380px; background: rgba(255, 255, 255, .22); }
```
